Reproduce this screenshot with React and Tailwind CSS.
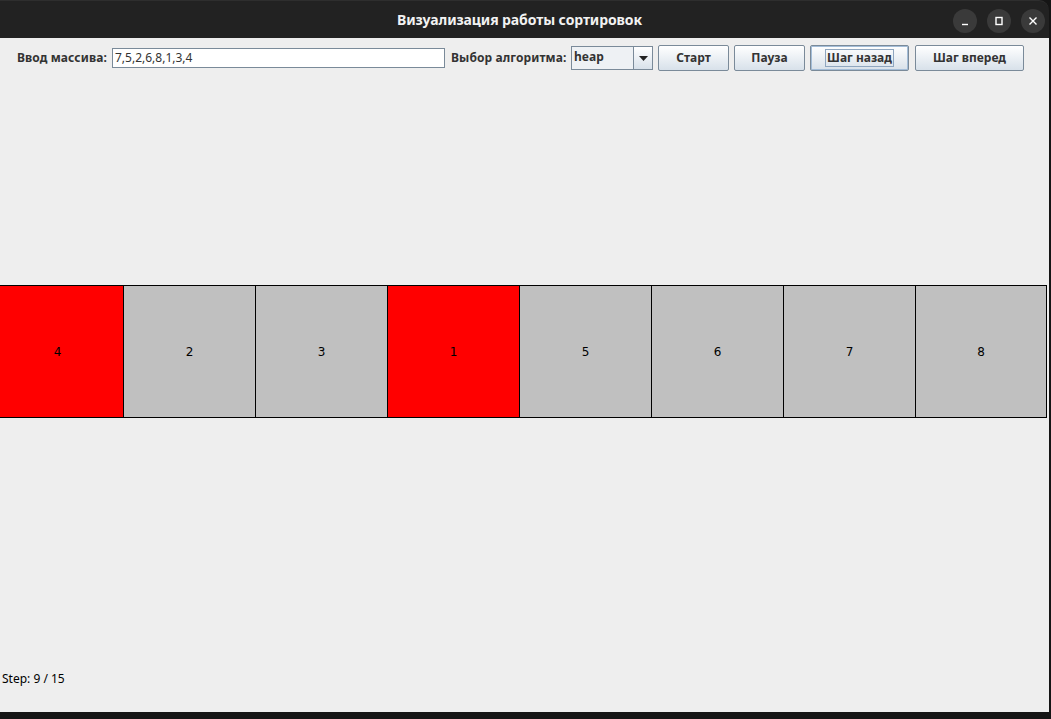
import React from 'react';

const cells = [
  { v: 4, hot: true },
  { v: 2 },
  { v: 3 },
  { v: 1, hot: true },
  { v: 5 },
  { v: 6 },
  { v: 7 },
  { v: 8 },
];

const btn =
  'h-[26px] flex items-center justify-center rounded-[2px] border border-[#7a8a99] bg-gradient-to-b from-[#ffffff] to-[#d8e1ea] text-[12px] font-bold text-[#333333] whitespace-nowrap';

const WinButton = ({ children }) => (
  <div className="w-[24px] h-[24px] rounded-full bg-[#3a3a3a] flex items-center justify-center">
    <svg width="10" height="10" viewBox="0 0 10 10" fill="none" stroke="#ffffff" strokeWidth="1.4">
      {children}
    </svg>
  </div>
);

export default function App() {
  return (
    <div className="w-[1051px] h-[719px] bg-[#151515] overflow-hidden font-['Noto_Sans',sans-serif]">
      <div className="w-[1049px] h-[712px] flex flex-col">
        {/* TITLE BAR */}
        <div className="relative h-[38px] bg-[#222222] rounded-tr-[10px] border-t border-[#2e2e2e] flex items-center justify-center pr-[10px]">
          <span className="text-[14px] font-bold text-[#f2f2f2] tracking-[-0.1px]">Визуализация работы сортировок</span>
          <div className="absolute right-[4px] top-[8px] flex gap-[10px]">
            <WinButton><path d="M2 8.5h6" /></WinButton>
            <WinButton><rect x="2" y="1.5" width="6" height="7" /></WinButton>
            <WinButton><path d="M1.5 1.5l7 7M8.5 1.5l-7 7" /></WinButton>
          </div>
        </div>

        {/* CONTENT */}
        <div className="flex-1 bg-[#eeeeee] flex flex-col overflow-hidden">
          {/* TOOLBAR */}
          <div className="flex items-center pl-[17px] pt-[7px] h-[33px]">
            <span className="w-[90px] shrink-0 whitespace-nowrap text-[12px] font-bold text-[#333333] tracking-[0.1px]">Ввод массива:</span>
            <div className="ml-[5px] w-[333px] shrink-0 h-[20px] bg-white border border-[#7a8a99] flex items-center pl-[2px] text-[12px] text-[#333333]">
              7,5,2,6,8,1,3,4
            </div>
            <span className="ml-[6px] w-[116px] shrink-0 whitespace-nowrap text-[12px] font-bold text-[#333333] tracking-[0.1px]">Выбор алгоритма:</span>
            <div className="ml-[4px] w-[82px] shrink-0 h-[24px] border border-[#7a8a99] flex bg-[#eef1f4]">
              <div className="flex-1 flex items-start pl-[2px] text-[12px] font-bold text-[#333333] leading-[20px]">heap</div>
              <div className="w-[19px] border-l border-[#7a8a99] bg-gradient-to-b from-[#ffffff] to-[#d8e1ea] flex items-center justify-center">
                <svg width="9" height="5" viewBox="0 0 9 5"><path d="M0 0h9L4.5 5z" fill="#222222" /></svg>
              </div>
            </div>
            <div className={`${btn} ml-[5px] w-[71px] shrink-0`}>Старт</div>
            <div className={`${btn} ml-[5px] w-[71px] shrink-0`}>Пауза</div>
            <div className={`${btn} ml-[5px] w-[99px] shrink-0 border-[#6d8fb3] shadow-[inset_0_0_0_1px_#a3bdd8]`}>
              <span className="px-[1px] leading-[16px] border border-[#8fa6bf]">Шаг назад</span>
            </div>
            <div className={`${btn} ml-[6px] w-[109px] shrink-0`}>Шаг вперед</div>
          </div>

          {/* ARRAY CELLS */}
          <div className="mt-[214px] ml-[-9px] flex">
            {cells.map((c, i) => (
              <div
                key={i}
                className={`w-[132px] h-[133px] shrink-0 border-y border-l border-black flex items-center justify-center text-[12px] text-black font-['DejaVu_Sans',sans-serif] ${
                  c.hot ? 'bg-[#ff0000]' : 'bg-[#c0c0c0]'
                } ${i === cells.length - 1 ? 'border-r' : ''}`}
              >
                {c.v}
              </div>
            ))}
          </div>

          <div className="flex-1" />
          <div className="pl-[2px] pb-[25px] text-[12px] text-black leading-[17px]">Step: 9 / 15</div>
        </div>
      </div>
    </div>
  );
}
